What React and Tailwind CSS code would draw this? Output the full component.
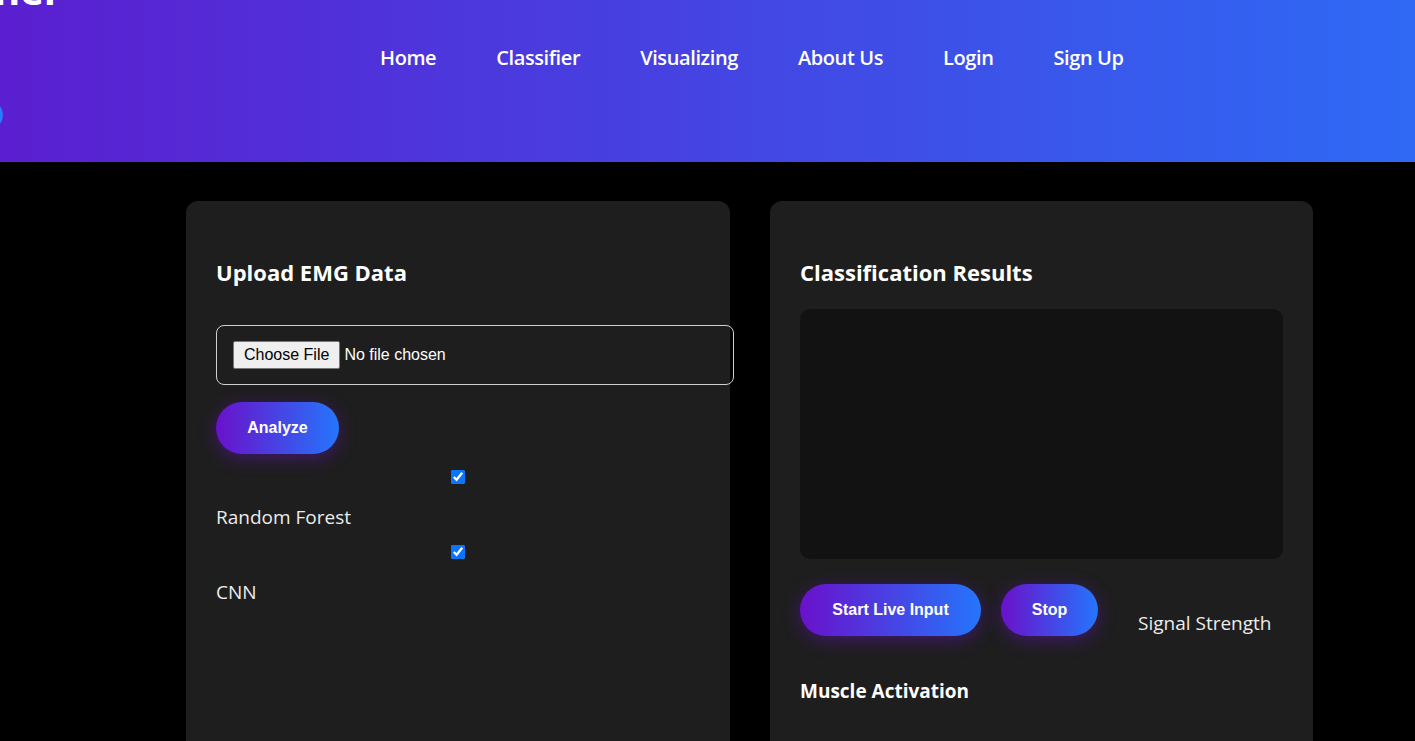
import React from 'react';

const sans = "font-['Open_Sans','Noto_Sans',sans-serif]";
const arial = "font-['Liberation_Sans',Arial,sans-serif]";

const GradButton = ({ children, className = '' }) => (
  <button
    className={`h-[52px] rounded-full bg-[linear-gradient(90deg,#6a11cb,#2575fc)] text-white text-[16px] font-bold shadow-[0_4px_18px_rgba(106,17,203,0.45)] ${arial} ${className}`}
  >
    {children}
  </button>
);

const ModelOption = ({ label }) => (
  <label className="flex flex-col">
    <span className="flex justify-center h-[15px] mb-[19px]">
      <input type="checkbox" defaultChecked className="w-[14px] h-[14px] accent-[#0b74ff]" />
    </span>
    <span className="text-[19px] leading-[26px] text-[#ececec]">{label}</span>
  </label>
);

const App = () => {
  return (
    <div className={`min-h-screen bg-black text-white ${sans}`}>
      <header className="relative h-[162px] overflow-hidden bg-[linear-gradient(90deg,#5b1fd0,#2e69f4)]">
        <div className="absolute right-[calc(100%-62px)] top-[-30px] text-[40px] font-bold leading-[40px] whitespace-nowrap">
          EMG Scanner
        </div>
        <div className="absolute left-[-27px] top-[100px] w-[30px] h-[30px] rounded-full bg-[#2a7bff]" />
        <nav className="flex gap-[60px] pl-[380px] pt-[44px] text-[20px] font-semibold leading-[28px] tracking-[-0.4px]">
          <a>Home</a>
          <a>Classifier</a>
          <a>Visualizing</a>
          <a>About Us</a>
          <a>Login</a>
          <a>Sign Up</a>
        </nav>
      </header>

      <main className="flex gap-[40px] pl-[186px] pt-[39px]">
        <section className="w-[544px] h-[560px] rounded-[12px] bg-[#1e1e1e] px-[30px] pt-[56px]">
          <h2 className="text-[22px] font-bold leading-[30px]">Upload EMG Data</h2>
          <div className="mt-[38px] w-[518px] h-[60px] rounded-[8px] border border-[#d0d0d0] flex items-center px-[16px]">
            <input type="file" className={`text-[16px] text-white ${arial} file:mr-[4px] file:px-[10px] file:py-[1px] file:bg-[#efefef] file:text-black file:border file:border-[#767676] file:rounded-[2px]`} />
          </div>
          <GradButton className="mt-[17px] w-[123px]">Analyze</GradButton>
          <div className="mt-[16px] flex flex-col gap-[15px] w-[484px]">
            <ModelOption label="Random Forest" />
            <ModelOption label="CNN" />
          </div>
        </section>

        <section className="w-[543px] h-[560px] rounded-[12px] bg-[#1e1e1e] px-[30px] pt-[56px]">
          <h2 className="text-[22px] font-bold leading-[30px]">Classification Results</h2>
          <div className="mt-[22px] h-[250px] rounded-[10px] bg-[#121212]" />
          <div className="mt-[25px] flex items-start gap-[20px]">
            <GradButton className="w-[181px]">Start Live Input</GradButton>
            <GradButton className="w-[97px]">Stop</GradButton>
            <span className="ml-[20px] mt-[26px] text-[19px] leading-[27px] text-[#ececec]">Signal Strength</span>
          </div>
          <h3 className="mt-[40px] text-[19px] font-bold leading-[28px]">Muscle Activation</h3>
        </section>
      </main>
    </div>
  );
};

export default App;
